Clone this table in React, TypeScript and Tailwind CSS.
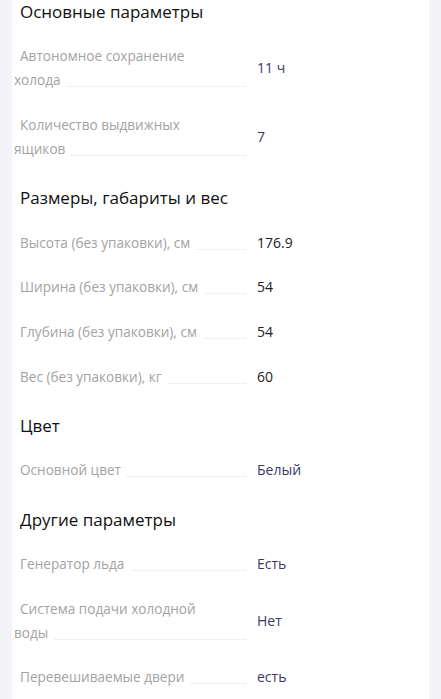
type Row = { label: string; value: string; dark?: boolean }
type Section = { title: string; rows: Row[] }

const sections: Section[] = [
  {
    title: "Основные параметры",
    rows: [
      { label: "Автономное сохранение холода", value: "11 ч" },
      { label: "Количество выдвижных ящиков", value: "7" },
    ],
  },
  {
    title: "Размеры, габариты и вес",
    rows: [
      { label: "Высота (без упаковки), см", value: "176.9", dark: true },
      { label: "Ширина (без упаковки), см", value: "54", dark: true },
      { label: "Глубина (без упаковки), см", value: "54", dark: true },
      { label: "Вес (без упаковки), кг", value: "60", dark: true },
    ],
  },
  {
    title: "Цвет",
    rows: [{ label: "Основной цвет", value: "Белый" }],
  },
  {
    title: "Другие параметры",
    rows: [
      { label: "Генератор льда", value: "Есть" },
      { label: "Система подачи холодной воды", value: "Нет" },
      { label: "Перевешиваемые двери", value: "есть" },
    ],
  },
]

export default function App() {
  return (
    <div className="min-h-screen bg-[#f3f3f8] px-[12px] overflow-hidden" style={{ fontFamily: '"Open Sans", "Noto Sans", sans-serif' }}>
      <div className="bg-white -mt-[15px] pb-[20px] min-h-[740px]">
        {sections.map((s) => (
          <div key={s.title}>
            <h2 className="pl-[8px] pt-[15px] pb-[10px] text-[17px] leading-[24px] font-medium text-[#111]">{s.title}</h2>
            {s.rows.map((r) => (
              <div key={r.label} className="flex items-center py-[10.33px] pl-[2px]">
                <div className="relative w-[232px] shrink-0 pr-[20px] text-[13.6px] leading-[24px] text-[#a3a3a3]">
                  <div className="absolute left-0 right-0 bottom-[5px] border-b border-dotted border-[#e2e2e2]" />
                  <span className="relative bg-white px-[6px]">{r.label}</span>
                </div>
                <div className={"ml-[11px] text-[14px] leading-[24px] " + (r.dark ? "text-[#222]" : "text-[#3a3a64]")}>
                  {r.value}
                </div>
              </div>
            ))}
          </div>
        ))}
      </div>
    </div>
  )
}
